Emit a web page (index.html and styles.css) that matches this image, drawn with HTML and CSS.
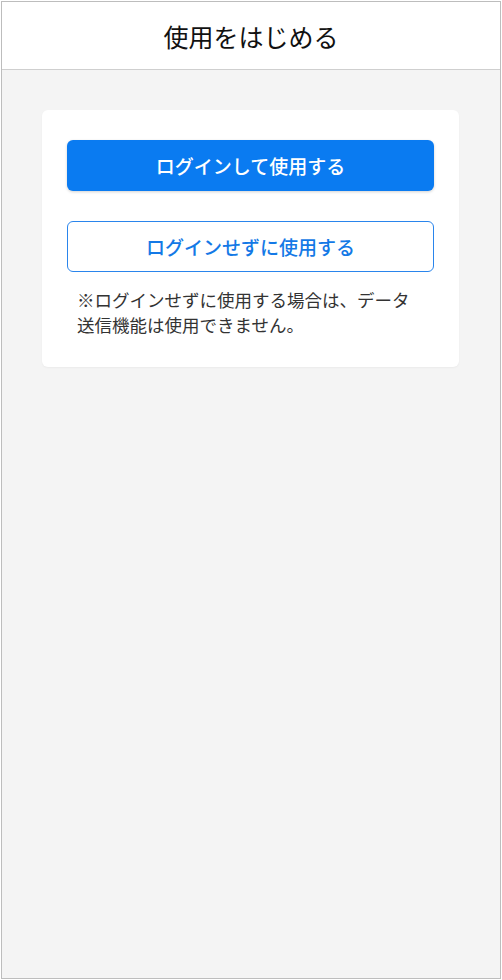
FILE: index.html
```html
<!DOCTYPE html>
<html lang="ja">
<head>
    <meta charset="UTF-8">
    <meta name="viewport" content="width=device-width, initial-scale=1.0">
    <title>使用をはじめる</title>
    <link rel="stylesheet" href="styles.css">
</head>
<body>
    <div class="app">
        <header class="top-bar">
            <h1>使用をはじめる</h1>
        </header>
        <main class="content">
            <div class="card">
                <button class="btn btn-primary">ログインして使用する</button>
                <button class="btn btn-outline">ログインせずに使用する</button>
                <p class="note">※ログインせずに使用する場合は、データ送信機能は使用できません。</p>
            </div>
        </main>
    </div>
</body>
</html>
```

FILE: styles.css
```css
* {
    box-sizing: border-box;
}
html, body {
    height: 100%;
}
body {
    margin: 0;
    padding: 0;
    font-family: "Noto Sans CJK JP", "Noto Sans", sans-serif;
    background-color: #ffffff;
}
.app {
    height: calc(100% - 2px);
    margin: 1px;
    border: 1px solid #bdbdbd;
    background-color: #f4f4f4;
    display: flex;
    flex-direction: column;
}
.top-bar {
    background-color: #ffffff;
    border-bottom: 1px solid #cfcfcf;
    height: 68px;
    display: flex;
    align-items: center;
    justify-content: center;
}
.top-bar h1 {
    margin: 0;
    font-size: 25px;
    font-weight: 400;
    color: #111;
}
.content {
    padding: 40px 41px 40px 40px;
}
.card {
    background-color: #ffffff;
    border-radius: 6px;
    padding: 30px 25px 30px;
    box-shadow: 0 1px 2px rgba(0, 0, 0, 0.04);
}
.btn {
    display: block;
    width: 100%;
    height: 51px;
    border-radius: 6px;
    font-family: inherit;
    font-size: 19px;
    font-weight: 500;
    cursor: pointer;
    padding: 0;
}
.btn-primary {
    background-color: #0a7bf1;
    color: #ffffff;
    border: none;
    box-shadow: 0 1px 3px rgba(0, 0, 0, 0.18);
}
.btn-outline {
    margin-top: 30px;
    background-color: #ffffff;
    color: #1479e6;
    border: 1px solid #2a85ec;
}
.note {
    margin: 15px 0 0;
    padding: 0 10px;
    font-size: 17.5px;
    line-height: 25px;
    color: #333;
}
```
